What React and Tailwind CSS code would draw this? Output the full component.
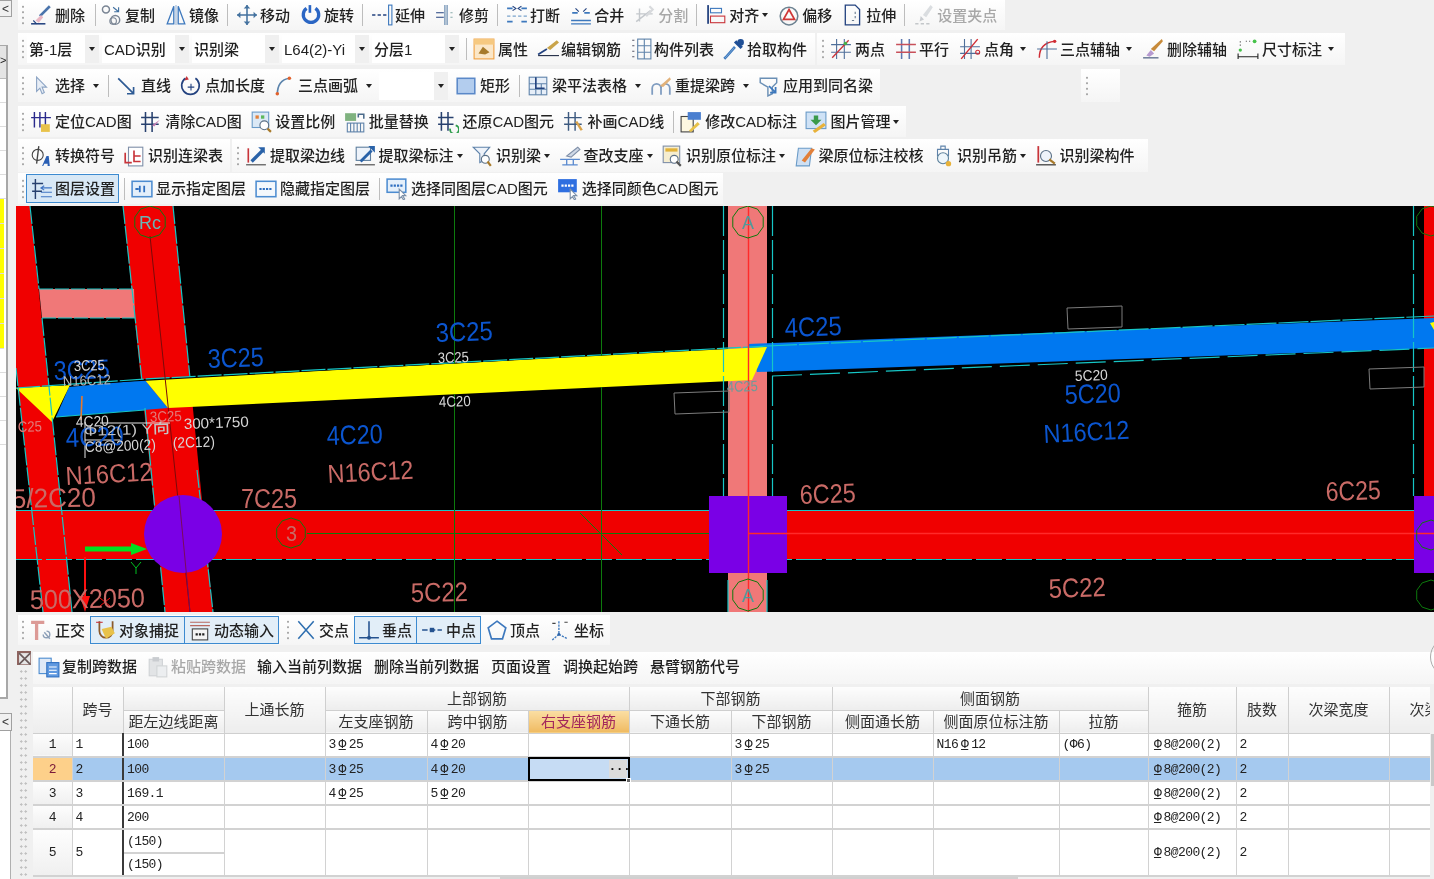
import React from "react"

const navy = "#23427f"
const blue = "#3d78bd"
const red = "#c8343a"

// small toolbar pictures, all on a 20x20 grid
const icons = {
  brush: <><path d="M18 2L9 11" stroke="#4a74ac" strokeWidth="2.4" /><path d="M10 10l-5 5 3 2 4-5z" fill="#e9b7c4" /><path d="M1 18h13" stroke={navy} strokeWidth="1.4" /><path d="M3 15l3 3" stroke={navy} /></>,
  copy: <><circle cx="4.5" cy="5" r="3.2" stroke="#7a8594" strokeWidth="1.3" /><circle cx="13" cy="14.5" r="4" stroke="#7a8594" strokeWidth="1.3" /><circle cx="11" cy="15.5" r="3" stroke="#7a8594" /><path d="M11 3l5 4m0-4v4h-4" stroke="#3f6f9f" /></>,
  mirror: <><path d="M8 2L2 18h6zM12 2l6 16h-6z" stroke={blue} strokeWidth="1.2" /><path d="M10 1v18" stroke="#9db7d6" /></>,
  move: <><path d="M10 1v18M1 10h18" stroke="#44729f" strokeWidth="1.4" /><path d="M10 1l-3 3h6zM10 19l-3-3h6zM1 10l3-3v6zM19 10l-3-3v6z" fill="#44729f" /></>,
  rotate: <><path d="M6 4a7 7 0 1 0 8 0" stroke="#2b66c4" strokeWidth="3" /><path d="M9 1v7" stroke="#2b66c4" strokeWidth="2.4" /></>,
  extend: <><path d="M1 10h3M6 10h3M11 10h3" stroke={navy} strokeWidth="1.5" /><rect x="16" y="1" width="3" height="18" stroke={blue} /></>,
  trim: <><path d="M9 1v18M11 1v18" stroke="#5b80a8" /><path d="M1 8h7M1 12h7" stroke={navy} /><path d="M14 8h2M14 12h2" stroke="#8aa" /></>,
  split: <><path d="M1 4h5M14 4h5M1 16h5M14 16h5" stroke={blue} strokeWidth="1.6" /><path d="M6 2l3 2-3 2M14 2l-3 2 3 2" stroke={navy} /><path d="M1 11h18" stroke="#7aa3cc" strokeDasharray="3 2" /></>,
  merge: <><path d="M1 15h18M1 18h18" stroke={blue} strokeWidth="1.2" /><path d="M2 8h5M13 8h5" stroke={blue} strokeWidth="1.6" /><path d="M5 4l3 3M15 4l-3 3" stroke={navy} /></>,
  cut: <><path d="M2 16L15 6M2 9h15M5 4v12" stroke="#c4c8cc" strokeWidth="1.3" /><path d="M14 2l3 3-6 6" stroke="#d8dadd" strokeWidth="2" /></>,
  align: <><rect x="2" y="1" width="1.6" height="17" fill={navy} /><rect x="5" y="4" width="10" height="4" stroke={blue} /><rect x="5" y="11" width="13" height="6" stroke={red} /></>,
  offset: <><circle cx="10" cy="11" r="8" stroke="#6d8291" strokeWidth="1.4" /><path d="M10 5l5 9H5z" stroke="#d03838" strokeWidth="1.6" /></>,
  stretch: <><path d="M3 1h9l4 4v14H3z" stroke={navy} strokeWidth="1.2" /><path d="M12 7v2M12 11v2M9 15h2" stroke="#6a7c90" /></>,
  grip: <><path d="M16 1l2 2-6 9-3-2z" fill="#dadde0" /><path d="M2 18h3M7 18h3M12 18h3" stroke="#c4c7ca" strokeWidth="1.4" /><path d="M7 11l3 3-4 2z" fill="#c9ccd0" /></>,
  attr: <><rect x="1" y="1" width="18" height="18" fill="#fbe7c8" stroke="#f0a040" /><rect x="1" y="1" width="18" height="5" fill="#f6c981" /><path d="M5 14l4-6 6 5-4 2z" fill="#a77a2a" /></>,
  edit: <><path d="M18 2l2 2-8 7-3-2z" fill="#c9a44a" /><path d="M1 15l8-5" stroke={navy} strokeWidth="1.6" /><path d="M1 16h19" stroke="#1f2a44" /></>,
  list: <><path d="M2 2h2M2 7h2M2 12h2M2 17h2" stroke="#556" /><rect x="7" y="1" width="12" height="18" stroke="#5f83aa" /><path d="M7 7h12M7 13h12M13 1v18" stroke="#5f83aa" /></>,
  pick: <><path d="M11 9l-7 8-2 2-1-1 2-2 7-8z" fill="#a8cbe8" stroke={blue} /><path d="M11 3l6 6" stroke="#1f4f96" strokeWidth="3" /><circle cx="16" cy="4" r="3" fill="#1f4f96" /></>,
  twopt: <><path d="M6 1v18M13 1v18M1 6h18M1 13h18" stroke="#4f6f9a" /><path d="M2 18L17 2" stroke="#c8343a" strokeWidth="1.2" /><circle cx="14" cy="5" r="1.6" fill="#46b24a" /></>,
  parallel: <><path d="M6 1v18M13 1v18" stroke="#5d78b0" strokeWidth="1.4" /><path d="M1 6h18M1 13h18" stroke="#c8505a" strokeWidth="1.4" /></>,
  angle: <><path d="M5 1v18M11 1v18M1 8h18M1 14h18" stroke="#4f6f9a" /><path d="M2 19L17 1" stroke="#d02c34" strokeWidth="1.3" /><circle cx="17" cy="13" r="1.8" stroke="#d02c34" /></>,
  threept: <><path d="M3 18C3 9 8 4 17 3" stroke="#d02c34" strokeWidth="1.3" /><path d="M10 3v16M1 10h18" stroke="#4f6f9a" /><circle cx="17" cy="3" r="1.5" fill="#d02c34" /></>,
  delaxis: <><path d="M18 1l1 2-8 9-3-2z" fill="#c78a3a" /><path d="M8 11l3 3-4 3-3-1z" fill="#b69ad0" /><path d="M1 18h14" stroke="#6f7e9a" strokeWidth="1.4" /></>,
  dim: <><circle cx="3" cy="11" r="1.5" fill="#46c24a" /><circle cx="16" cy="3" r="1.7" fill="#46c24a" /><path d="M1 14v5M19 14v5M1 17h18" stroke="#222" /><path d="M3 3v1M3 6v1M8 3h1M11 3h1" stroke="#555" /></>,
  pointer: <path d="M6 2v13l3-3 2 5 2-1-2-5h4z" fill="#e8eef6" stroke="#8ca4c4" />,
  line: <path d="M2 3l14 14m0-6v6h-6" stroke="#2d5a94" strokeWidth="1.5" />,
  addlen: <><path d="M5 3a8 8 0 1 0 9 0" stroke={navy} strokeWidth="1.5" /><path d="M6 1l2 3-4 1z" fill="#c8343a" /><path d="M10 8v6M7 11h6" stroke={navy} /></>,
  arc: <><path d="M3 18C3 9 7 4 14 3" stroke="#5c84ac" strokeWidth="1.5" /><circle cx="3" cy="17" r="1.6" fill="#e2622c" /><circle cx="14" cy="3" r="1.6" fill="#e2622c" /></>,
  rect: <rect x="2" y="3" width="16" height="14" fill="#b3cdee" stroke="#5a88c8" strokeWidth="1.4" />,
  table: <><rect x="2" y="2" width="16" height="16" fill="#e6eef8" stroke="#5f83aa" /><path d="M2 8h16M2 13h16M8 2v16M13 8v10" stroke="#5f83aa" /><path d="M8 2v10h8" stroke={navy} strokeWidth="1.4" /></>,
  refetch: <><path d="M2 18v-6a4 4 0 0 1 8 0v6M10 18v-6a4 4 0 0 1 8 0v6" stroke="#7f9cc0" strokeWidth="1.6" /><path d="M18 2l1 2-7 7-3-1z" fill="#e2b27a" /></>,
  apply: <><path d="M2 3h15v4l-4 4v6l-4 2v-8L2 7z" stroke="#6a8fb5" strokeWidth="1.3" /><path d="M10 10l6 6m0-5v5h-5" stroke={blue} strokeWidth="1.6" /></>,
  locate: <><path d="M4 1v14M9 1v14M14 1v14M1 6h18" stroke="#2a2a8c" strokeWidth="1.3" /><rect x="10" y="12" width="8" height="7" fill="#e8c24a" /></>,
  clear: <><path d="M5 1v18M11 1v18M1 6h16M1 12h16" stroke="#27406e" strokeWidth="1.4" /><path d="M18 8l-5 6-2-1z" fill="#c07ab0" /></>,
  scale: <><rect x="2" y="1" width="15" height="14" fill="#dbe9f6" stroke="#6a9bc8" /><rect x="5" y="4" width="3" height="3" fill="#e2803a" /><rect x="10" y="4" width="3" height="3" fill="#5cb85c" /><circle cx="13" cy="13" r="4" fill="#fff" stroke="#5a6f85" /><path d="M16 16l3 3" stroke="#a87a2a" strokeWidth="2" /></>,
  batch: <><rect x="1" y="2" width="10" height="7" fill="#7fb27f" /><path d="M13 6V3h5v4" stroke="#4a6a8a" strokeWidth="1.4" /><rect x="3" y="11" width="15" height="8" stroke="#5f83aa" /><path d="M6 11v8M9 11v8M12 11v8M15 11v8" stroke="#5f83aa" /></>,
  restore: <><path d="M4 1v17M10 1v17M1 6h14M1 12h14" stroke="#27406e" strokeWidth="1.4" /><path d="M12 16a4 4 0 1 0 5-3" stroke="#2c9c4a" strokeWidth="1.6" /></>,
  draw: <><path d="M5 1v17M11 1v17M1 6h16M1 12h16" stroke="#3d5a80" strokeWidth="1.3" /><path d="M13 9l5 8-2 1-5-8z" fill="#d8a24a" /></>,
  modify: <><rect x="1" y="5" width="11" height="14" fill="#fdf7e0" stroke="#444" /><rect x="7" y="1" width="12" height="7" fill="#4a7fd0" /><path d="M8 18l8-8 2 2-8 7z" fill="#e8c24a" /></>,
  picture: <><rect x="1" y="1" width="18" height="15" fill="#cfe2f6" stroke="#6a9bc8" /><path d="M8 4h4v4h3l-5 5-5-5h3z" fill="#3a9a4a" /><path d="M7 18l10-7 2 2-10 7z" fill="#e8b23a" /></>,
  symbol: <><circle cx="7" cy="9" r="5" stroke="#444" /><path d="M8 1L6 17" stroke="#444" strokeWidth="1.2" /><path d="M11 19l4-9h2l1 9h-2v-2h-3l-1 2z" fill="#2a5fb4" /></>,
  link: <><rect x="5" y="2" width="13" height="17" fill="#fff" stroke="#7f8fa8" /><path d="M2 7v9h6M10 5v10h6M10 10h6" stroke="#c8343a" strokeWidth="1.5" /></>,
  edgeline: <><path d="M1 18h18" stroke="#444" /><path d="M3 3v13" stroke="#c8343a" strokeWidth="1.5" /><path d="M6 15l10-10" stroke="#2a62a8" strokeWidth="3" /><path d="M12 2h6v6z" fill="#2a62a8" /></>,
  marklabel: <><rect x="2" y="2" width="13" height="12" fill="#eef3fa" stroke="#5f7f9f" /><path d="M1 18h18" stroke="#444" /><path d="M6 15l10-10" stroke="#2a62a8" strokeWidth="2.6" /><path d="M13 1h6v6z" fill="#2a62a8" /></>,
  recog: <><path d="M2 2h15l-5 6v6l-4 2V8z" fill="#eef3fa" stroke="#5f83aa" /><circle cx="13" cy="13" r="3.6" fill="#fff" stroke="#5a6f85" /><path d="M15 15l3 4" stroke="#a87a2a" strokeWidth="2" /></>,
  support: <><path d="M1 13h18M3 18h14M7 13v5M13 13v5" stroke="#5a8ad0" strokeWidth="1.2" /><path d="M17 2l2 2-8 7-4-1z" fill="#cfd8e6" stroke="#7f8fa8" /></>,
  inplace: <><rect x="2" y="1" width="15" height="15" fill="#f5edd0" stroke="#7f8fa8" /><rect x="4" y="3" width="11" height="3" fill="#e2b23a" /><circle cx="12" cy="13" r="3.6" fill="#fff" stroke="#5a6f85" /><path d="M14 15l4 4" stroke="#555" strokeWidth="2" /></>,
  check: <><path d="M4 3h12l-2 16H2z" fill="#cfe0f3" stroke="#6a9bc8" /><path d="M7 14l9-11 3 1-9 12z" fill="#e2803a" /></>,
  hanger: <><path d="M8 1h4v3H8zM5 4h10v6H5z" stroke="#5f83aa" /><circle cx="10" cy="12" r="5" fill="#eef6fb" stroke="#5a7f9a" /><circle cx="15" cy="17" r="2.4" fill="#e8b23a" /></>,
  member: <><path d="M3 1v15" stroke="#c8343a" strokeWidth="1.6" /><path d="M1 18h18" stroke="#444" strokeWidth="1.2" /><circle cx="10" cy="10" r="5" fill="#eef3fa" stroke="#5a6f85" /><path d="M13 13l5 4" stroke="#a87a2a" strokeWidth="2" /></>,
  layer: <><path d="M4 1v18M1 5h10M1 12h9" stroke="#27406e" strokeWidth="1.3" /><path d="M9 9h10M9 13h10M9 17h10M12 7l-3 2 3 2" stroke="#3f74c4" /></>,
  cad1: <><rect x="1" y="3" width="18" height="14" fill="#e4effa" stroke="#4c8cd0" strokeWidth="1.4" /><path d="M4 10h3M8 7v6M12 7v6" stroke="#2f6fc0" strokeWidth="1.6" /></>,
  cad2: <><rect x="1" y="3" width="18" height="14" fill="#f4f8fc" stroke="#4c8cd0" strokeWidth="1.4" /><path d="M4 10h12" stroke="#2f6fc0" strokeWidth="2" strokeDasharray="2 1" /></>,
  cad3: <><rect x="1" y="1" width="17" height="12" fill="#e4effa" stroke="#4c8cd0" strokeWidth="1.4" /><path d="M4 7h11" stroke="#2f6fc0" strokeWidth="2" strokeDasharray="2 1" /><path d="M12 10v9l2-2 2 3 1-1-2-3h3z" fill="#fff" stroke="#7c90a8" /></>,
  cad4: <><rect x="1" y="1" width="17" height="12" fill="#2f6fe0" /><path d="M4 7h11" stroke="#fff" strokeWidth="2" strokeDasharray="2 1" /><path d="M12 10v9l2-2 2 3 1-1-2-3h3z" fill="#fff" stroke="#7c90a8" /></>,
  ortho: <><path d="M1 3h12M6 3v16" stroke="#dc9a96" strokeWidth="3" /><path d="M13 12l5 6m-3-7a3 3 0 1 1-3 3" stroke="#8da0b8" strokeWidth="1.3" /></>,
  snap: <><path d="M4 2v9a6 6 0 0 0 12 0V2" stroke="#8b5a2b" strokeWidth="1.6" /><path d="M6 9l9-2 3 6-8 5z" fill="#e8c24a" /><path d="M1 3h6" stroke="#c8343a" /></>,
  dynamic: <><path d="M1 3h18M1 6h18" stroke="#b86860" /><rect x="3" y="9" width="14" height="10" fill="#f4f4f4" stroke="#444" /><path d="M6 14h8" stroke="#222" strokeWidth="2" strokeDasharray="2 1" /></>,
  cross: <path d="M3 2l14 16M17 2L3 18" stroke="#2f6fb0" strokeWidth="1.4" />,
  perp: <><path d="M1 17h18M10 2v15" stroke="#24528f" strokeWidth="1.4" /><circle cx="10" cy="17" r="1.8" fill="#24528f" /></>,
  mid: <><path d="M1 10h18" stroke="#24528f" strokeWidth="1.4" strokeDasharray="5 2" /><rect x="8" y="8" width="4" height="4" fill="#24528f" /></>,
  apex: <path d="M10 2l8 6-3 10H5L2 8z" stroke="#3d78bd" strokeWidth="1.5" />,
  coord: <><path d="M9 2v12l-6 5M9 14l8 4" stroke="#3d78bd" strokeWidth="1.2" strokeDasharray="2 1" /><path d="M3 4h3M14 3h3" stroke="#444" /><circle cx="9" cy="14" r="1.3" fill="#2a62a8" /></>,
  clip: <><rect x="1" y="2" width="11" height="14" fill="#dfe9f6" stroke="#4c8cd0" /><rect x="8" y="6" width="11" height="13" fill="#5f99e0" stroke="#2f6fc0" /><path d="M10 10h7M10 13h7M10 16h7" stroke="#fff" /></>,
  paste: <><rect x="2" y="3" width="12" height="15" fill="#e2e4e6" stroke="#cfd2d5" /><rect x="5" y="1" width="6" height="4" fill="#c9ccd0" /><rect x="9" y="9" width="9" height="10" fill="#eceef0" stroke="#d2d4d6" /></>,
  ribbon: <><rect x="0" y="0" width="20" height="20" fill="#8f6560" /><rect x="3" y="3" width="16" height="16" fill="#e6e6e6" /><path d="M3 3l16 16M19 3L3 19" stroke="#6a5a5a" strokeWidth="2.4" /></>,
}

function Ico({ name, className = "" }) {
  return <svg width="22" height="22" viewBox="0 0 20 20" fill="none" className={`shrink-0 -mr-[2px] ${className}`}>{icons[name]}</svg>
}

function Caret({ cls }) {
  return <span className={`${cls} w-0 h-0 border-x-[3.5px] border-x-transparent border-t-[4px] border-t-[#222] shrink-0`} />
}

function Grip() {
  return <span className="block w-[4px] h-[22px] shrink-0 bg-[radial-gradient(circle,#a9a9a9_1.1px,transparent_1.3px)] bg-[length:4px_5.5px]" />
}

function Sep({ className = "" }) {
  return <span className={`block w-px h-[22px] bg-[#bdbdbd] shrink-0 ${className}`} />
}

function Item({ i, t, caret, compact, dim, className = "" }) {
  const caretCls = caret === "tight" ? "ml-[3px]" : caret === "mid" ? "ml-[6px]" : "ml-[8px]"
  return (
    <div className={`flex items-center shrink-0 whitespace-nowrap ${dim ? "text-[#a8a8a8]" : ""} ${className}`}>
      <Ico name={i} />
      <span className={compact ? "ml-[4px]" : "ml-[5px]"}>{t}</span>
      {caret && <Caret cls={caretCls} />}
    </div>
  )
}

function Combo({ t, w, className = "" }) {
  return (
    <div className={`flex shrink-0 h-[28px] ${className}`}>
      <div className={`${w} bg-white px-[2px] flex items-center overflow-hidden whitespace-nowrap`}>{t}</div>
      <div className="w-[14px] bg-[#f0f0f0] flex items-center justify-center"><Caret cls="" /></div>
    </div>
  )
}

function Panel({ children, className = "" }) {
  return <div className={`flex items-center bg-linear-to-b from-white to-[#f5f5f5] ${className}`}>{children}</div>
}

// pale decagon used for axis bubbles on the drawing
function bubble(cx, cy, r) {
  const pts = []
  for (let k = 0; k < 10; k++) {
    const a = (k * Math.PI) / 5
    pts.push(`${cx + r * Math.sin(a)},${cy - r * Math.cos(a)}`)
  }
  return pts.join(" ")
}

const cadBlue = "#0b55cf"
const cadRed = "#c96a66"
const cadWhite = "#d6d6d6"

const labels = [
  ["3C25", 208, 368, 56, 27, cadBlue, -2],
  ["3C25", 436, 342, 57, 27, cadBlue, -2],
  ["4C25", 785, 337, 57, 27, cadBlue, -2],
  ["5C20", 1065, 404, 56, 27, cadBlue, -2],
  ["N16C12", 1044, 443, 86, 26, cadBlue, -3],
  ["4C20", 327, 445, 56, 27, cadBlue, -2],
  ["3C25", 54, 380, 56, 27, cadBlue, -2],
  ["4C20", 66, 447, 58, 27, cadBlue, -2],
  ["N16C12", 328, 483, 86, 26, cadRed, -3],
  ["N16C12", 66, 485, 87, 26, cadRed, -3],
  ["7C25", 241, 508, 56, 27, cadRed, 0],
  ["5/2C20", 12, 508, 84, 27, cadRed, -1],
  ["500X2050", 30, 609, 115, 27, cadRed, -1],
  ["5C22", 411, 602, 57, 27, cadRed, -1],
  ["6C25", 800, 504, 56, 27, cadRed, -2],
  ["5C22", 1049, 598, 57, 27, cadRed, -2],
  ["6C25", 1326, 501, 55, 27, cadRed, -2],
  ["3C25", 438, 363, 31, 15, cadWhite, -2],
  ["4C20", 439, 407, 32, 15, cadWhite, -2],
  ["5C20", 1075, 381, 33, 15, cadWhite, -2],
  ["3C25", 74, 371, 31, 15, cadWhite, -2],
  ["N16C12", 63, 386, 48, 14, "#b8b8b8", -2],
  ["4C20", 76, 427, 33, 15, cadWhite, -2],
  ["300*1750", 184, 429, 65, 15, cadWhite, -2],
  ["(2C12)", 173, 448, 42, 15, cadWhite, -2],
  ["C8@200(2)", 85, 452, 71, 15, cadWhite, -2],
  ["Φ12(1) Y向", 84, 436, 86, 14, "#c4c4c4", -2],
  ["3C25", 150, 422, 32, 15, "#e07a78", -2],
  ["C25", 18, 432, 24, 15, "#e07a78", -2],
  ["4C25", 727, 392, 31, 15, "#709a98", -2],
  ["Rc", 139, 229, 22, 19, "#6ab4b4", 0],
  ["3", 286, 541, 11, 22, cadRed, 0],
  ["A", 742, 229, 12, 18, "#4f9a9a", 0],
  ["A", 742, 602, 12, 18, "#4f9a9a", 0],
]

const bubbles = [[150, 222, 16], [748, 222, 16], [748, 595, 16], [291, 533, 15], [1431, 221, 15], [1431, 535, 15], [1431, 595, 15]]

function Drawing() {
  return (
    <svg viewBox="16 206 1418 406" className="block w-[1418px] h-[406px] bg-black shrink-0">
      <polygon points="16,206 30,206 72,612 43,612 16,368" fill="#f00000" />
      <polygon points="123,206 173,206 213,612 165,612" fill="#f00000" />
      <polygon points="39,289 134,289 135,318 42,318" fill="#f07878" />
      <rect x="728" y="206" width="39" height="406" fill="#f07878" />
      <rect x="1424" y="206" width="10" height="290" fill="#f00000" />
      <rect x="16" y="510" width="1398" height="49" fill="#f00000" />
      <polygon points="748,344 1434,318 1434,348 757,372" fill="#0078f0" />
      <polygon points="69,387 145,380 168,408 56,417" fill="#0078f0" />
      <polygon points="145,380 767,347 752,380 168,408" fill="#ffff00" />
      <polygon points="16,388 70,385 52,422" fill="#ffff00" />
      <polygon points="1430,323 1434,322 1434,330" fill="#ffff00" />

      <g stroke="#16c6c6" strokeWidth="1.2">
        <path d="M30 206L39 289M42 318L72 612" strokeDasharray="18 2" />
        <path d="M16 368L43 612" strokeDasharray="18 2" />
        <path d="M123 206L142 381M145 408L165 612" strokeDasharray="18 2" />
        <path d="M173 206L190 378M197 470L213 612" strokeDasharray="18 2" />
        <path d="M16 388L145 379L767 346" strokeDasharray="24 2" />
        <path d="M767 346L1434 316" strokeDasharray="30 2" />
        <path d="M772 376L1434 348" strokeDasharray="30 8" />
        <path d="M56 417L145 410" />
        <path d="M39 289H134M42 318H135" strokeDasharray="14 2" />
        <path d="M723.5 206V496M772.5 206V496" strokeDasharray="30 4" />
        <path d="M1413.5 206V496" strokeDasharray="30 4" />
        <path d="M16 510.5H1414" />
        <path d="M16 559.5H1414" strokeDasharray="26 4" />
        <path d="M728 580V612M767 580V612" />
      </g>

      <path d="M454.5 206V364M454.5 394V612M601.5 206V356M601.5 387V612" stroke="#0d7a0d" />
      <path d="M307 533.5H748" stroke="#0d7a0d" />
      <path d="M580 513L622 555" stroke="#0d7a0d" />
      <path d="M150 236L190 612" stroke="#7a0a0a" />

      <circle cx="183" cy="534" r="39" fill="#7a00e6" />
      <rect x="709" y="496" width="78" height="77" fill="#7a00e6" />
      <rect x="1414" y="496" width="20" height="77" fill="#7a00e6" />
      <path d="M179 496L190 612" stroke="#7a0a5a" />
      <path d="M748.5 206V612M748 533.5H1434" stroke="#ff2a2a" strokeWidth="1.4" />

      {bubbles.map(([cx, cy, r]) => <polygon key={`${cx}-${cy}`} points={bubble(cx, cy, r)} fill="none" stroke="#0d7a0d" />)}

      <path d="M674 393L729 391V412L675 414Z" fill="none" stroke="#7c7c7c" />
      <path d="M1067 308L1122 306V327L1068 329Z" fill="none" stroke="#7c7c7c" />
      <path d="M1369 369L1424 367V387L1370 389Z" fill="none" stroke="#7c7c7c" />

      <path d="M82 396L81 420" stroke="#e8782a" strokeWidth="1.6" />
      <path d="M85 422V458M100 423H170M85 440H120" stroke="#e6e6e6" />
      <path d="M85 549H132" stroke="#00e020" strokeWidth="5" />
      <path d="M131 543L147 549L131 555Z" fill="#00e020" />
      <path d="M85 557V600" stroke="#ff1010" strokeWidth="2" />
      <path d="M80 596L85 612L90 596Z" fill="#ff1010" />
      <path d="M131 562L136 568L141 562M136 568V574" stroke="#00c020" fill="none" />
      <path d="M100 598L110 606M110 598L100 606" stroke="#ff1010" />

      {labels.map(([t, x, y, w, s, c, r], k) => (
        <text key={k} x={x} y={y} fontSize={s} fill={c} textLength={w} lengthAdjust="spacingAndGlyphs"
          fontFamily="'Liberation Sans','Noto Sans CJK SC',sans-serif" transform={r ? `rotate(${r} ${x} ${y})` : undefined}>{t}</text>
      ))}
    </svg>
  )
}

const Bar = ({ a, b }) => <>{a}<span className="inline-block w-[13px] text-center [text-decoration:underline]">Φ</span>{b}</>
const stir = <><span className="inline-block w-[12px] text-center [text-decoration:underline]">Φ</span>8@200(2)</>

const td = "p-0 pl-[3px] border-r border-b-2 border-[#d2d2d2] whitespace-nowrap overflow-hidden"
const th = "p-0 font-normal text-center border-r border-b border-[#cfcfcf] bg-linear-to-b from-[#fdfdfd] to-[#ededed] whitespace-nowrap overflow-hidden"
const num = "p-0 text-center border-r border-b-2 border-[#d2d2d2] bg-linear-to-b from-[#fdfdfd] to-[#f0f0f0]"
const frozen = "p-0 pl-[3px] border-r-2 border-r-[#3a3a3a] border-b-2 border-b-[#d2d2d2] whitespace-nowrap"

function BeamTable() {
  const rows = [
    { n: "1", d: "100", l: <Bar a="3" b="25" />, m: <Bar a="4" b="20" />, bot: <Bar a="3" b="25" />, so: <Bar a="N16" b="12" />, tie: "(Φ6)" },
    { n: "2", d: "100", l: <Bar a="3" b="25" />, m: <Bar a="4" b="20" />, bot: <Bar a="3" b="25" />, on: true },
    { n: "3", d: "169.1", l: <Bar a="4" b="25" />, m: <Bar a="5" b="20" /> },
    { n: "4", d: "200" },
  ]
  return (
    <div className="w-[1397px] overflow-hidden mt-[3px]">
      <table className="table-fixed w-[1416px] border-collapse [font-family:'Liberation_Mono','Noto_Sans_CJK_SC',monospace] text-[13px] tracking-[-0.6px] font-normal text-[#222]">
        <colgroup>
          {["w-[39px]", "w-[51px]", "w-[101px]", "w-[101px]", "w-[102px]", "w-[101px]", "w-[101px]", "w-[102px]", "w-[101px]", "w-[101px]", "w-[126px]", "w-[89px]", "w-[88px]", "w-[52px]", "w-[101px]", "w-[60px]"].map((c, k) => <col key={k} className={c} />)}
        </colgroup>
        <thead className="[font-family:'Liberation_Sans','Noto_Sans_CJK_SC',sans-serif] text-[15px] tracking-normal text-[#333]">
          <tr className="h-[23px]">
            <th rowSpan={2} className={th} />
            <th rowSpan={2} className={th}>跨号</th>
            <th className={th} />
            <th rowSpan={2} className={th}>上通长筋</th>
            <th colSpan={3} className={th}>上部钢筋</th>
            <th colSpan={2} className={th}>下部钢筋</th>
            <th colSpan={3} className={th}>侧面钢筋</th>
            <th rowSpan={2} className={th}>箍筋</th>
            <th rowSpan={2} className={th}>肢数</th>
            <th rowSpan={2} className={th}>次梁宽度</th>
            <th rowSpan={2} className={`${th} text-left pl-[20px]`}>次梁加筋</th>
          </tr>
          <tr className="h-[23px]">
            <th className={th}>距左边线距离</th>
            <th className={th}>左支座钢筋</th>
            <th className={th}>跨中钢筋</th>
            <th className="p-0 font-normal text-center border-r border-b border-[#cfcfcf] bg-linear-to-b from-[#fbdfa4] to-[#efba60] text-[#a3275c]">右支座钢筋</th>
            <th className={th}>下通长筋</th>
            <th className={th}>下部钢筋</th>
            <th className={th}>侧面通长筋</th>
            <th className={th}>侧面原位标注筋</th>
            <th className={th}>拉筋</th>
          </tr>
        </thead>
        <tbody>
          {rows.map((r) => (
            <tr key={r.n} className={`h-[24px] ${r.on ? "bg-[#a5c9ef]" : "bg-white"}`}>
              <td className={r.on ? "p-0 text-center border-r border-b-2 border-[#d2d2d2] bg-[#fdd08a] text-[#7a1a3a]" : num}>{r.n}</td>
              <td className={frozen}>{r.n}</td>
              <td className={td}>{r.d}</td>
              <td className={td} />
              <td className={td}>{r.l}</td>
              <td className={td}>{r.m}</td>
              <td className="p-0 border-r border-b-2 border-[#d2d2d2] relative">
                {r.on && (
                  <div className="absolute -inset-[1px] z-10 border-[2px] border-black bg-[#c6dcf4] flex justify-end">
                    <span className="w-[18px] m-[1px] bg-[#dcdcdc] text-center font-bold text-[#111] leading-[13px]">...</span>
                    <span className="absolute -right-[3px] -bottom-[4px] size-[5px] bg-[#666] border border-white" />
                  </div>
                )}
              </td>
              <td className={td} />
              <td className={td}>{r.bot}</td>
              <td className={td} />
              <td className={td}>{r.so}</td>
              <td className={td}>{r.tie}</td>
              <td className={td}>{stir}</td>
              <td className={td}>2</td>
              <td className={td} />
              <td className={td} />
            </tr>
          ))}
          <tr className="h-[24px] bg-white">
            <td rowSpan={2} className={num}>5</td>
            <td rowSpan={2} className={frozen}>5</td>
            <td className={td}>(150)</td>
            {[0, 1, 2, 3, 4, 5, 6, 7, 8].map((k) => <td key={k} rowSpan={2} className={td} />)}
            <td rowSpan={2} className={td}>{stir}</td>
            <td rowSpan={2} className={td}>2</td>
            <td rowSpan={2} className={td} />
            <td rowSpan={2} className={td} />
          </tr>
          <tr className="h-[23px] bg-white">
            <td className={td}>(150)</td>
          </tr>
        </tbody>
      </table>
    </div>
  )
}

function SideStrip() {
  return (
    <div className="w-[16px] h-[879px] shrink-0 flex flex-col">
      <div className="w-[12px] h-[17px] border border-[#a0a0a0] border-l-0 bg-[#f0f0f0] flex items-center justify-center text-[12px] leading-none text-[#333]">&lt;</div>
      <div className="mt-[28px] w-[8px] h-[654px] border-r-2 border-b-2 border-t border-[#a8a8a8] overflow-hidden bg-white flex flex-col">
        <div className="h-[33px] shrink-0 bg-[#e4e4e4] border-b border-[#bbb] text-[11px] leading-[28px] text-[#222]">&gt;</div>
        {[0, 1, 2, 3, 4].map((k) => <div key={k} className="h-[24px] shrink-0 border-b border-[#ddd]" />)}
        {[0, 1, 2, 3, 4, 5].map((k) => <div key={k} className="h-[25px] shrink-0 w-[4px] bg-[#ffff00] border-b border-[#ddd]" />)}
        {[0, 1, 2, 3].map((k) => <div key={k} className="h-[24px] shrink-0 border-b border-[#ddd]" />)}
      </div>
      <div className="mt-[14px] w-[12px] h-[18px] border border-[#a0a0a0] border-l-0 bg-[#f0f0f0] flex items-center justify-center text-[12px] leading-none text-[#333]">&lt;</div>
      <div className="w-[11px] flex-1 bg-white border-r border-[#b0b0b0]" />
    </div>
  )
}

export default function App() {
  return (
    <div className="relative w-[1434px] h-[879px] overflow-hidden flex bg-[#f0f0f0] text-[15px] leading-none font-medium text-[#222] blur-[0.35px] [font-family:'Liberation_Sans','Noto_Sans_CJK_SC',sans-serif]">
      <SideStrip />
      <div className="w-[1418px] shrink-0 flex flex-col">
        {/* row 1 */}
        <div className="h-[33px] pb-[3px] pl-[2px] flex">
          <Panel className="w-[987px] pl-[3px] gap-[10px]">
            <div className="flex -mr-[5px]"><Grip /></div>
            <Item i="brush" t="删除" />
            <Sep className="-mr-[5px]" />
            <Item compact i="copy" t="复制" />
            <Item compact i="mirror" t="镜像" />
            <Sep className="-mx-[2px]" />
            <Item compact i="move" t="移动" />
            <Item compact i="rotate" t="旋转" />
            <Sep className="-mx-[2px]" />
            <Item compact i="extend" t="延伸" />
            <Item compact i="trim" t="修剪" />
            <Sep className="-mx-[2px]" />
            <Item compact i="split" t="打断" />
            <Item compact i="merge" t="合并" />
            <Item compact dim i="cut" t="分割" />
            <Sep className="-mx-[2px]" />
            <Item compact i="align" t="对齐" caret="tight" />
            <Item compact i="offset" t="偏移" />
            <Item compact i="stretch" t="拉伸" />
            <Sep className="-mx-[2px]" />
            <Item compact dim i="grip" t="设置夹点" />
          </Panel>
        </div>
        {/* row 2 */}
        <div className="h-[36px] pb-[4px] pl-[2px] flex gap-[2px]">
          <Panel className="w-[797px] pl-[3px]">
            <Grip />
            <div className="ml-[2px] flex items-center gap-[3px]">
              <Combo t="第-1层" w="w-[58px]" />
              <Combo t="CAD识别" w="w-[73px]" />
              <Combo t="识别梁" w="w-[73px]" />
              <Combo t="L64(2)-Yi" w="w-[73px]" />
              <Combo t="分层1" w="w-[73px]" />
            </div>
            <Sep className="ml-[7px] mr-[6px]" />
            <div className="flex items-center gap-[9px]">
              <Item i="attr" t="属性" />
              <Item compact i="edit" t="编辑钢筋" />
              <Item compact i="list" t="构件列表" />
              <Item compact i="pick" t="拾取构件" />
            </div>
          </Panel>
          <Panel className="w-[528px] pl-[4px]">
            <Grip />
            <div className="ml-[5px] flex items-center gap-[10px]">
              <Item i="twopt" t="两点" />
              <Item compact i="parallel" t="平行" />
              <Item i="angle" t="点角" caret="mid" />
              <Item compact i="threept" t="三点辅轴" caret="mid" />
              <Item i="delaxis" t="删除辅轴" />
              <Item i="dim" t="尺寸标注" caret="mid" />
            </div>
          </Panel>
        </div>
        {/* row 3 */}
        <div className="h-[37px] pb-[4px] pl-[2px] flex">
          <Panel className="w-[862px] pl-[3px] gap-[9px]">
            <div className="flex -mr-[4px]"><Grip /></div>
            <Item i="pointer" t="选择" caret="wide" />
            <Sep className="-mr-[2px]" />
            <Item i="line" t="直线" />
            <Item i="addlen" t="点加长度" />
            <Item compact i="arc" t="三点画弧" caret="wide" />
            <Combo t="" w="w-[55px]" className="-ml-[2px] -mr-[2px]" />
            <Item i="rect" t="矩形" />
            <Sep className="-mr-[2px]" />
            <Item i="table" t="梁平法表格" caret="wide" />
            <Item i="refetch" t="重提梁跨" caret="wide" />
            <Item i="apply" t="应用到同名梁" />
          </Panel>
          <Panel className="ml-[201px] w-[39px] pl-[4px]"><Grip /></Panel>
        </div>
        {/* row 4 */}
        <div className="h-[33px] pb-[2px] pl-[2px] flex">
          <Panel className="w-[888px] pl-[3px] gap-[8.5px]">
            <div className="flex -mr-[3.5px]"><Grip /></div>
            <Item i="locate" t="定位CAD图" />
            <Item i="clear" t="清除CAD图" />
            <Item i="scale" t="设置比例" />
            <Item i="batch" t="批量替换" />
            <Item i="restore" t="还原CAD图元" />
            <Item i="draw" t="补画CAD线" />
            <Sep className="-mr-[2px]" />
            <Item i="modify" t="修改CAD标注" />
            <Item i="picture" t="图片管理" caret="tight" />
          </Panel>
        </div>
        {/* row 5 */}
        <div className="h-[34px] pb-[1px] pl-[2px] flex gap-[2px]">
          <Panel className="w-[212px] pl-[3px] gap-[8px]">
            <div className="flex -mr-[3px]"><Grip /></div>
            <Item i="symbol" t="转换符号" />
            <Item i="link" t="识别连梁表" />
          </Panel>
          <Panel className="w-[916px] pl-[4px] gap-[8.5px]">
            <div className="flex -mr-[3.5px]"><Grip /></div>
            <Item i="edgeline" t="提取梁边线" />
            <Item i="marklabel" t="提取梁标注" caret="tight" />
            <Item i="recog" t="识别梁" caret="tight" />
            <Item i="support" t="查改支座" caret="tight" />
            <Item i="inplace" t="识别原位标注" caret="tight" />
            <Item i="check" t="梁原位标注校核" />
            <Item i="hanger" t="识别吊筋" caret="tight" />
            <Item i="member" t="识别梁构件" />
          </Panel>
        </div>
        {/* row 6 */}
        <div className="h-[33px] pb-[2px] pl-[2px] flex">
          <Panel className="w-[705px] pl-[3px] gap-[9px]">
            <div className="flex -mr-[8px]"><Grip /></div>
            <div className="-mr-[4px] h-[29px] border border-[#3c8ad0] bg-[#d8e8f6] pl-[4px] pr-[3px] flex items-center"><Item compact i="layer" t="图层设置" /></div>
            <Sep className="-mr-[3px]" />
            <Item i="cad1" t="显示指定图层" />
            <Item i="cad2" t="隐藏指定图层" />
            <Sep className="-mr-[3px]" />
            <Item i="cad3" t="选择同图层CAD图元" />
            <Item i="cad4" t="选择同颜色CAD图元" />
          </Panel>
        </div>

        <Drawing />

        {/* snap toggles */}
        <div className="h-[40px] pt-[3px] pb-[7px] pl-[2px] flex">
          <Panel className="w-[592px] pl-[3px]">
            <Grip />
            <Item i="ortho" t="正交" className="ml-[5px]" />
            <div className="ml-[5px] h-[28px] border border-[#3c8ad0] bg-[#e2eef8] pl-[4px] pr-[5px] flex items-center"><Item compact i="snap" t="对象捕捉" /></div>
            <div className="-ml-px h-[28px] border border-[#3c8ad0] bg-[#e2eef8] pl-[4px] pr-[4px] flex items-center"><Item i="dynamic" t="动态输入" /></div>
            <div className="flex ml-[7px]"><Grip /></div>
            <Item compact i="cross" t="交点" className="ml-[5px]" />
            <div className="ml-[5px] h-[28px] border border-[#3c8ad0] bg-[#e2eef8] pl-[3px] pr-[4px] flex items-center"><Item compact i="perp" t="垂点" /></div>
            <div className="-ml-px h-[28px] border border-[#3c8ad0] bg-[#e2eef8] pl-[4px] pr-[4px] flex items-center"><Item i="mid" t="中点" /></div>
            <Item compact i="apex" t="顶点" className="ml-[5px]" />
            <Item i="coord" t="坐标" className="ml-[9px]" />
          </Panel>
        </div>

        {/* span table */}
        <div className="flex flex-1 min-h-0">
          <div className="w-[17px] shrink-0 flex flex-col">
            <svg width="14" height="14" viewBox="0 0 20 20" fill="none" className="ml-[1px] mt-[-1px] shrink-0">{icons.ribbon}</svg>
            <div className="ml-[3px] mt-[3px] w-[9px] flex-1 bg-[radial-gradient(circle,#c0c0c0_1px,transparent_1.2px)] bg-[length:4.5px_7px]" />
          </div>
          <div className="flex-1 min-w-0 flex flex-col">
            <Panel className="h-[32px] pl-[5px] pb-[3px] gap-[12px] shrink-0">
              <Item compact i="clip" t="复制跨数据" />
              <Item compact dim i="paste" t="粘贴跨数据" className="-ml-[2px]" />
              <span className="-ml-[1px]">输入当前列数据</span>
              <span>删除当前列数据</span>
              <span>页面设置</span>
              <span>调换起始跨</span>
              <span>悬臂钢筋代号</span>
            </Panel>
            <BeamTable />
          </div>
        </div>
      </div>

      {/* bits that float over the table edge */}
      <div className="absolute right-[-36px] top-[637px] size-[40px] rounded-full border border-[#aaa]" />
      <div className="absolute right-0 top-[734px] w-[3px] h-[52px] bg-[#c8c8c8]" />
      <div className="absolute left-[500px] top-[877px] w-[518px] h-[2px] bg-[#d0d0d0]" />
    </div>
  )
}
